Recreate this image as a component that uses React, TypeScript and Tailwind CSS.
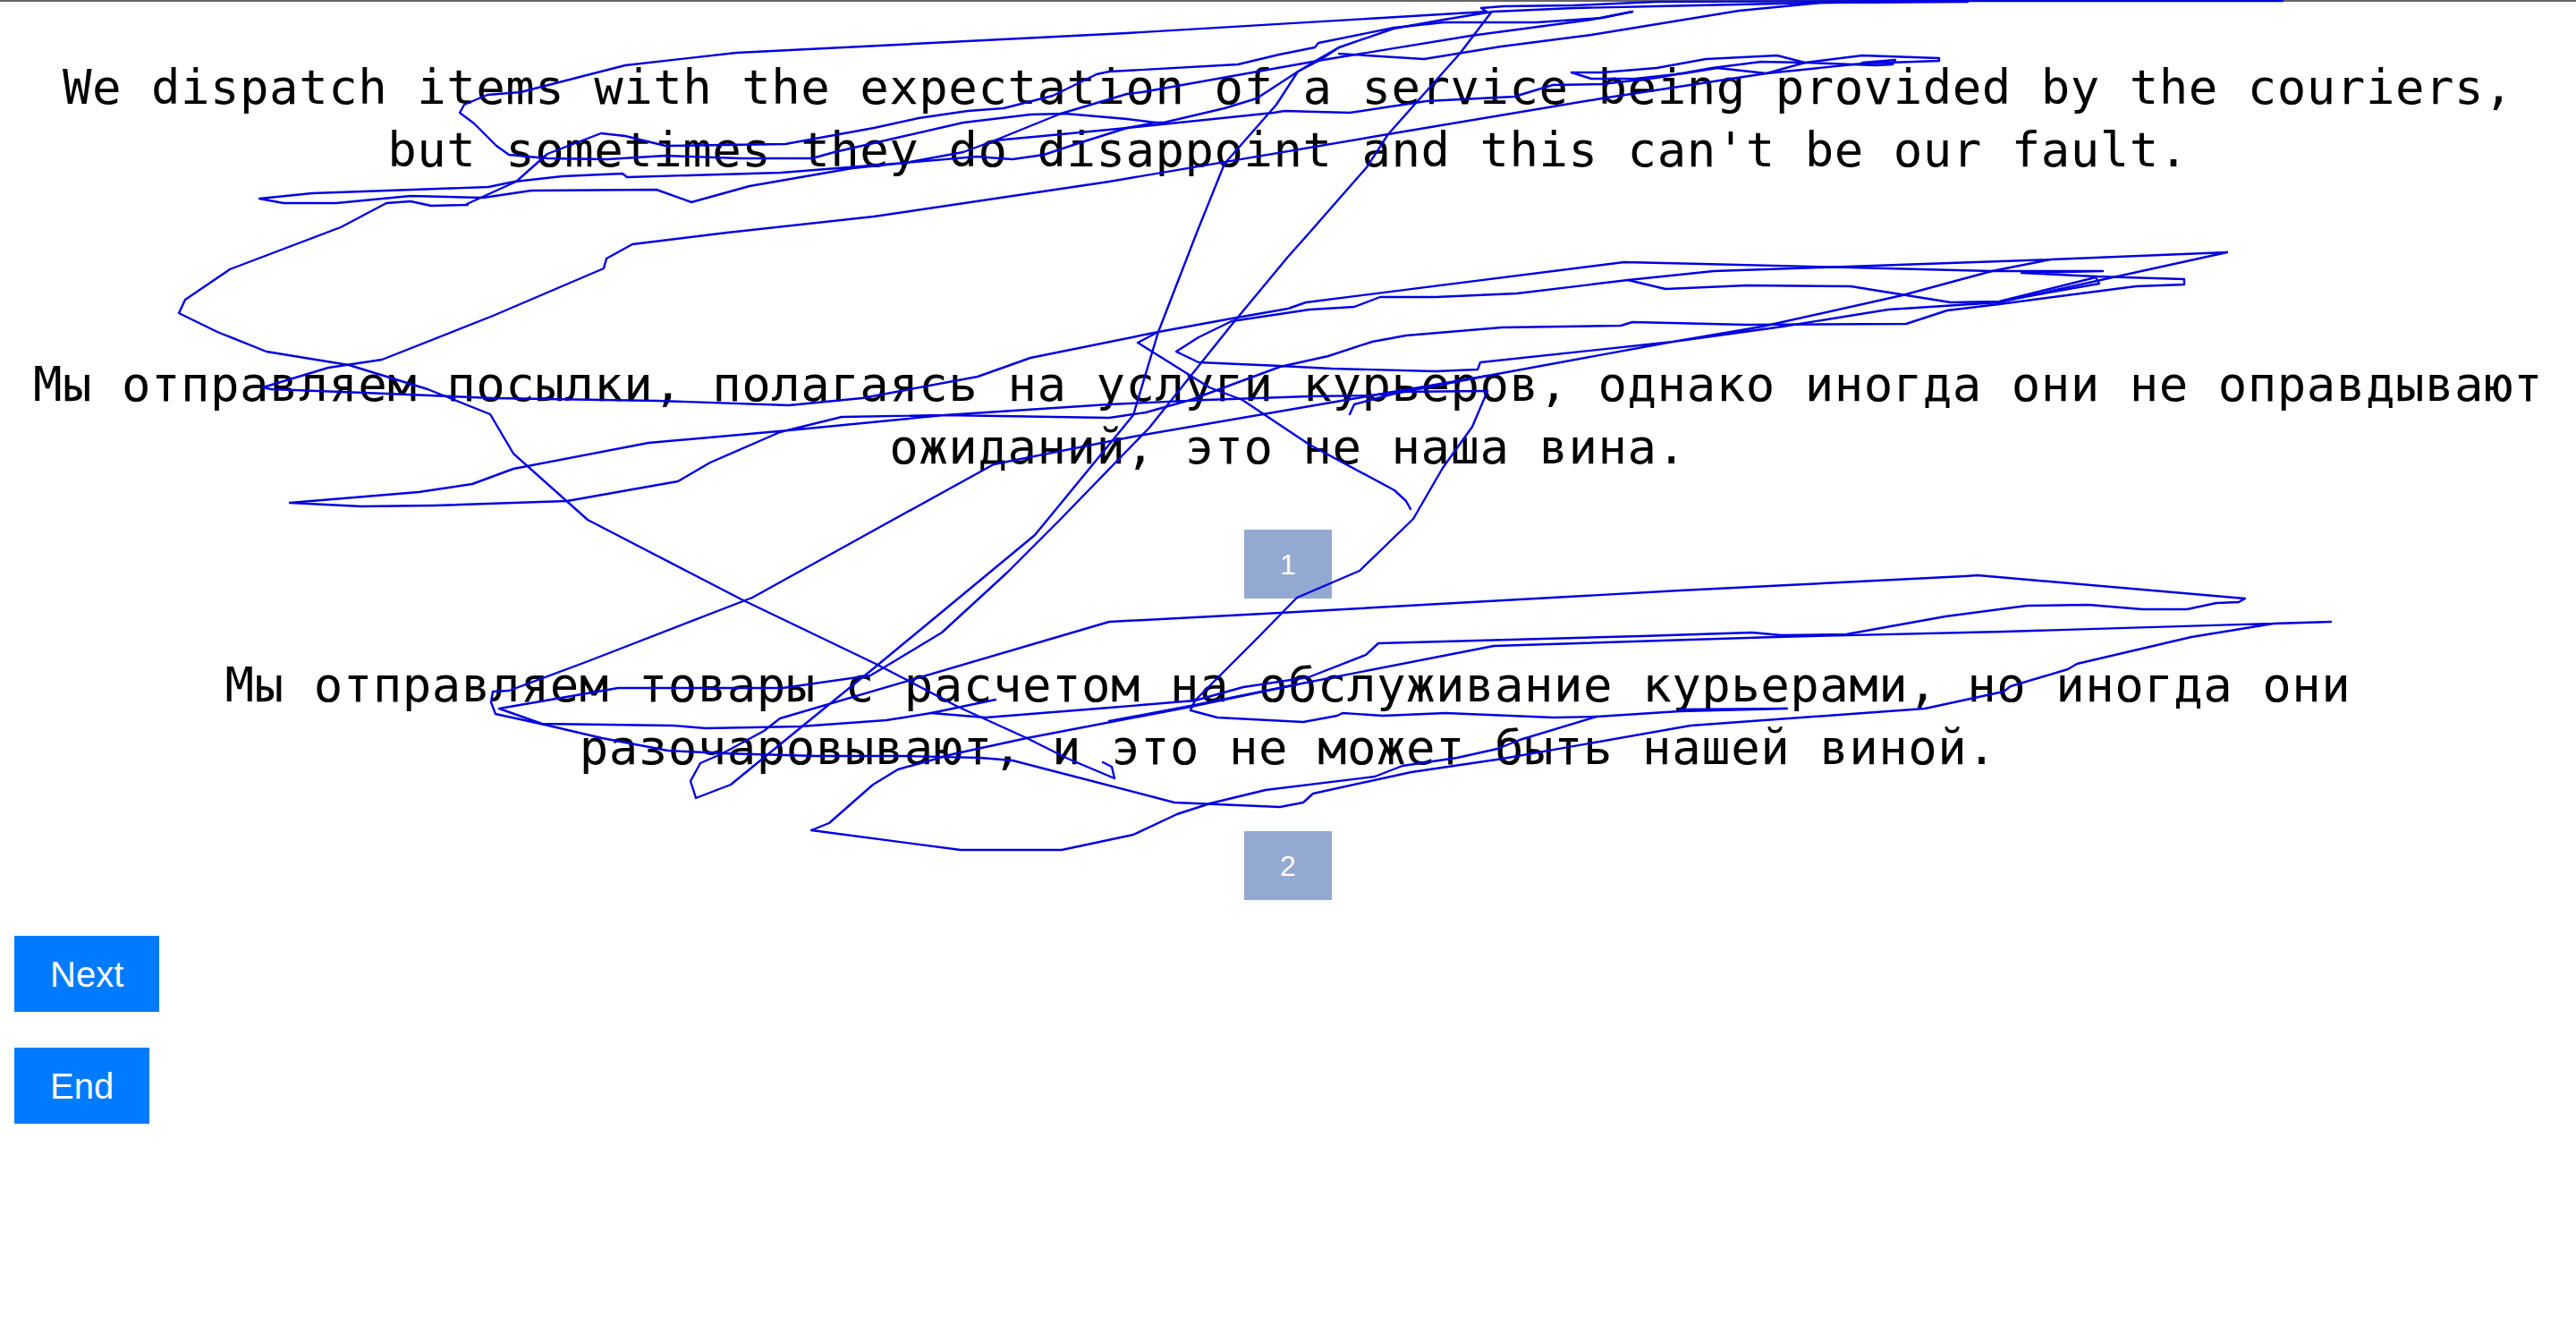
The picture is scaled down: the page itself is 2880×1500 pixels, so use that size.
const STROKES: number[][][] = [
  // top run along the page edge, then down through the first sentence
  [[2552,1],[2158,1],[1852,2],[1760,6],[1681,7],[1656,9],[1662,13],[1260,37],[823,59],[699,73],[582,103],[545,106],[519,117],[514,126],[530,138],[555,163],[569,173],[612,177],[679,178],[744,174],[828,177],[908,177],[933,170],[1007,153],[1077,137],[1152,128],[1191,127],[1260,133],[1292,137],[1301,137],[1369,121],[1405,110],[1451,80],[1476,65],[1497,53],[1558,32],[1614,22],[1669,13]],
  [[1669,13],[1760,9],[1852,7],[2036,3],[2200,2]],
  [[522,228],[577,203],[612,172],[672,149],[699,152],[744,163],[878,161],[977,143],[1027,132],[1082,124],[1122,121],[1177,107],[1226,83],[1240,80],[1384,72],[1430,61],[1470,53],[1474,48],[1558,31],[1614,25],[1718,25],[1791,20],[1825,13]],
  [[1825,13],[1779,22],[1644,40],[1473,68],[1277,103],[1260,105],[1186,127],[1112,157],[1077,170],[1012,182],[953,188],[838,208],[773,226],[734,212],[594,213],[540,221],[459,219],[376,227],[317,227],[290,222],[349,216],[546,209],[575,203],[629,197],[696,194],[701,198],[873,193],[1012,182],[1092,175],[1104,176],[1132,178],[1167,173],[1206,160],[1260,143],[1292,137]],
  [[1112,157],[1166,152],[1260,143],[1424,126],[1436,124],[1509,126],[1595,113],[1693,108],[1736,95],[1791,94],[1852,87],[1914,76],[1969,69],[2018,70],[2082,62],[2168,65],[2168,68],[2082,71],[1975,82],[1791,110],[1552,150],[1240,203],[977,242],[813,260],[707,273],[678,289],[675,300],[551,353],[427,402],[367,411],[294,433],[303,435],[432,440],[551,445],[735,448],[882,453],[964,445],[1093,421],[1152,400],[1295,371],[1377,356],[1440,345],[1460,338],[1816,293],[1903,295],[2069,299],[2227,303],[2351,303],[2260,305],[2343,309],[2442,312],[2442,318],[2388,320],[2235,340],[2177,347],[2131,362],[1953,363],[1825,360],[1812,364],[1679,366],[1572,375],[1534,382],[1485,398],[1431,410],[1377,430],[1331,447],[1281,461],[1240,467],[1056,464],[882,481],[725,495],[574,524],[528,541],[468,550],[324,562],[404,566],[487,565],[634,560],[758,538],[794,517],[872,483],[941,466],[1056,464],[1240,452],[1348,447],[1464,443],[1534,442],[1559,438],[1663,437]],
  // second loop of the lower sentence block
  [[1497,60],[1592,66],[1678,52],[1779,39],[1944,12],[2036,3],[2200,1]],
  [[1757,81],[1791,81],[1852,76],[1907,66],[1987,62],[2018,70],[2097,73],[2116,72],[2119,67],[2082,70]],
  [[1757,81],[1779,88],[1828,88],[1883,82],[1920,76],[1975,82],[2018,70]],
  [[1497,53],[1476,67],[1451,80],[1427,117],[1369,183],[1338,260],[1295,371],[1267,464],[1157,598],[978,746],[936,780],[817,877],[778,892],[772,873],[783,853],[808,842],[854,817],[872,803],[1240,695],[1431,685],[1878,660],[2197,644],[2211,643],[2510,669],[2503,673],[2478,674],[2445,681],[2395,681],[2335,676],[2266,677],[2175,689],[2064,709],[1991,710],[1959,707],[1835,711],[1541,719],[1527,732],[1463,757],[1390,768],[1336,783],[1240,791],[1102,802],[1041,797],[1113,782]],
  [[1041,797],[991,805],[894,812],[789,814],[753,811],[606,809],[558,792],[691,769],[875,769],[973,755],[985,748],[1053,707],[1126,640],[1185,581],[1285,478],[1377,363],[1440,287],[1464,260],[1528,187],[1552,150],[1632,60],[1667,14]],
  [[523,229],[482,230],[459,225],[432,227],[381,254],[257,301],[207,335],[200,350],[243,371],[298,393],[390,408],[478,435],[548,463],[574,507],[657,581],[771,640],[829,670],[979,742],[1010,758],[1071,790],[1148,825],[1194,848],[1246,870],[1243,857],[1233,852]],
  [[841,668],[655,740],[569,772],[551,773],[549,785],[554,798],[609,810],[673,825],[747,839],[808,842],[912,845],[1010,845],[1096,847],[1132,850],[1313,897],[1431,902],[1457,897],[1468,887],[1578,863],[1680,848],[1890,811],[2152,792],[2240,773],[2248,767],[2312,748],[2322,742],[2450,712],[2542,697],[2606,695],[2240,706],[1985,712],[1670,722],[1450,765],[1331,790],[1148,825],[1065,843],[1004,860],[976,877],[927,920],[907,928],[1074,950],[1187,950],[1267,933],[1316,910],[1353,898],[1415,883],[1537,868],[1568,856],[1629,847],[1674,837],[1699,827],[1785,801],[1878,795],[1998,792],[1878,793]],
  [[841,668],[964,600],[1111,519],[1267,488],[1505,447],[1663,420],[1870,382],[1970,365],[2127,330],[2227,303],[2293,290],[2490,282],[2235,338],[2111,346],[1993,365],[1870,382],[1655,405],[1652,413],[1605,415],[1489,412],[1431,409],[1340,405],[1315,393],[1340,377],[1377,359],[1464,346],[1514,343],[1543,332],[1605,332],[1696,328],[1820,313],[1916,303],[2036,299],[2293,290]],
  [[1820,313],[1862,323],[1953,319],[2069,320],[2181,338],[2235,337],[2343,310],[2347,317],[2235,337]],
  [[1509,463],[1514,452],[1559,440],[1663,420]],
  [[1663,437],[1646,477],[1613,523],[1580,580],[1520,638],[1450,668],[1406,713],[1336,783],[1331,794],[1361,802],[1457,807],[1495,800],[1501,797],[1546,800],[1616,797],[1737,802],[1785,801]],
  // hook that ends under the second sentence
  [[1295,371],[1272,383],[1352,433],[1389,447],[1464,497],[1559,548],[1572,560],[1577,569]],
  [[1240,806],[1336,788],[1450,765]],
];

function Sentence({ lines, className }: { lines: string[]; className: string }) {
  return (
    <p className={`text-center text-black text-[54px] leading-[70px] tracking-[0.5px] font-['DejaVu_Sans_Mono',monospace] ${className}`}>
      {lines.map((line) => (
        <span key={line} className="block whitespace-nowrap">
          {line}
        </span>
      ))}
    </p>
  );
}

function Marker({ label }: { label: string }) {
  return (
    <div className="mx-auto flex h-[77px] w-[98px] items-center justify-center bg-[#94a9d1] text-[32px] text-white">
      {label}
    </div>
  );
}

export default function App() {
  return (
    <div className="relative min-h-[1500px] border-t-2 border-[#666666] bg-white font-['Liberation_Sans',Arial,sans-serif]">
      <Sentence
        className="mt-[61px]"
        lines={[
          "We dispatch items with the expectation of a service being provided by the couriers,",
          "but sometimes they do disappoint and this can't be our fault.",
        ]}
      />
      <Sentence
        className="mt-[192px]"
        lines={[
          "Мы отправляем посылки, полагаясь на услуги курьеров, однако иногда они не оправдывают",
          "ожиданий, это не наша вина.",
        ]}
      />
      <div className="mt-[57px]">
        <Marker label="1" />
      </div>
      <Sentence
        className="mt-[62px]"
        lines={[
          "Мы отправляем товары с расчетом на обслуживание курьерами, но иногда они",
          "разочаровывают, и это не может быть нашей виной.",
        ]}
      />
      <div className="mt-[58px]">
        <Marker label="2" />
      </div>
      <div className="ml-4 mt-10 flex flex-col items-start gap-10">
        <button className="h-[85px] bg-[#007bff] px-10 text-[40px] text-white">Next</button>
        <button className="h-[85px] bg-[#007bff] px-10 text-[40px] text-white">End</button>
      </div>
      <svg
        className="pointer-events-none absolute -top-[2px] left-0 h-[1500px] w-[2880px]"
        viewBox="0 0 2880 1500"
        fill="none"
        stroke="#0000e0"
        strokeWidth="2.4"
        strokeLinejoin="round"
        strokeLinecap="round"
      >
        {STROKES.map((points, i) => (
          <polyline key={i} points={points.map((p) => p.join(",")).join(" ")} />
        ))}
      </svg>
    </div>
  );
}
